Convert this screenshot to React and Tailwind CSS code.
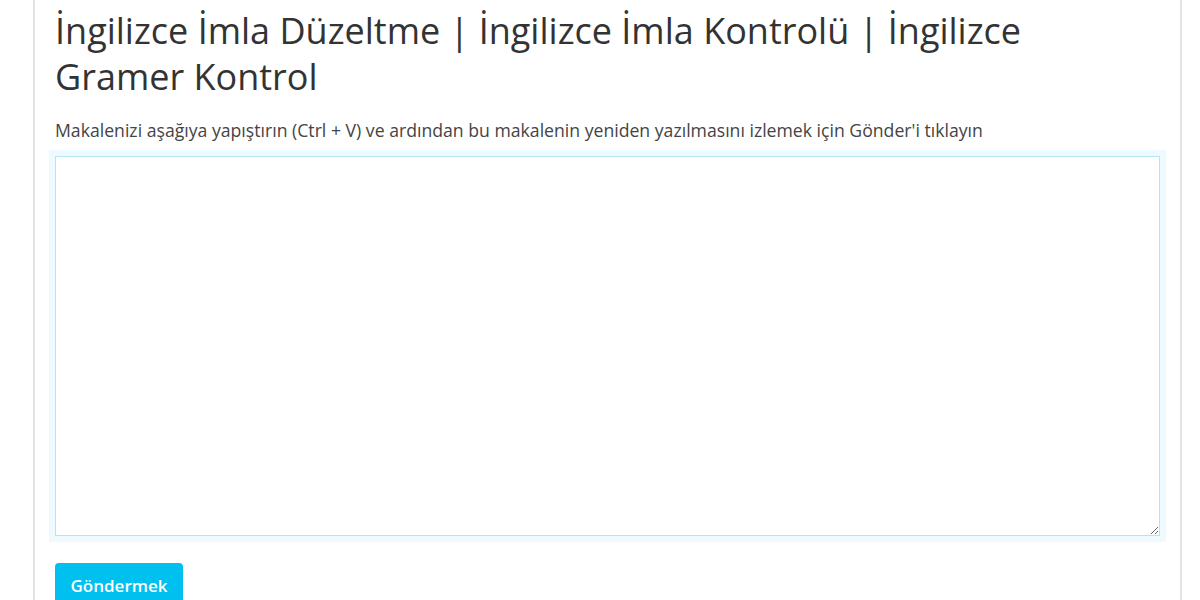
export default function App() {
  return (
    <div className="min-h-screen bg-white font-['Open_Sans',sans-serif]">
      <div className="ml-[33px] w-[1149px] min-h-screen border-x-2 border-[#e4e4e4] px-[20px]">
        <h1 className="max-w-[1060px] pt-[8px] text-[36px] leading-[46px] font-normal text-[#333]">
          İngilizce İmla Düzeltme | İngilizce İmla Kontrolü | İngilizce Gramer Kontrol
        </h1>
        <p className="mt-[18px] text-[17.65px] leading-[24px] text-[#444]">
          Makalenizi aşağıya yapıştırın (Ctrl + V) ve ardından bu makalenin yeniden yazılmasını izlemek için Gönder'i tıklayın
        </p>
        <div className="mt-[8px] -mx-[6px] bg-[#eefaff] p-[6px]">
          <textarea className="block h-[380px] w-full border border-[#b7e4f4] bg-white outline-none" />
        </div>
        <button className="mt-[21px] h-[46px] w-[128px] rounded-[4px] bg-[#00c0ef] text-[17px] font-semibold text-white">
          Göndermek
        </button>
      </div>
    </div>
  );
}
